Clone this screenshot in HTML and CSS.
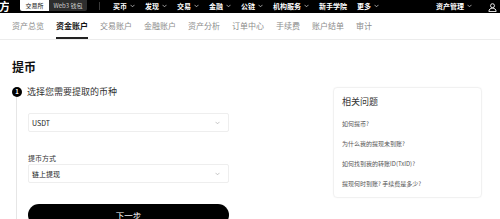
FILE: index.html
```html
<!DOCTYPE html>
<html lang="zh-CN">
<head>
<meta charset="utf-8">
<title>提币</title>
<link rel="stylesheet" href="styles.css">
</head>
<body>
<header class="topbar">
  <span class="logo">方</span>
  <div class="switch">
    <span class="sw sw-active">交易所</span>
    <span class="sw sw-web3">Web3 钱包</span>
  </div>
  <span class="sep"></span>
  <nav class="menu">
    <span class="mi">买币<svg class="chev" viewBox="0 0 6 4"><path d="M0.6 0.6 L3 3 L5.4 0.6"/></svg></span>
    <span class="mi">发现<svg class="chev" viewBox="0 0 6 4"><path d="M0.6 0.6 L3 3 L5.4 0.6"/></svg></span>
    <span class="mi">交易<svg class="chev" viewBox="0 0 6 4"><path d="M0.6 0.6 L3 3 L5.4 0.6"/></svg></span>
    <span class="mi">金融<svg class="chev" viewBox="0 0 6 4"><path d="M0.6 0.6 L3 3 L5.4 0.6"/></svg></span>
    <span class="mi">公链<svg class="chev" viewBox="0 0 6 4"><path d="M0.6 0.6 L3 3 L5.4 0.6"/></svg></span>
    <span class="mi">机构服务<svg class="chev" viewBox="0 0 6 4"><path d="M0.6 0.6 L3 3 L5.4 0.6"/></svg></span>
    <span class="mi">新手学院</span>
    <span class="mi">更多<svg class="chev" viewBox="0 0 6 4"><path d="M0.6 0.6 L3 3 L5.4 0.6"/></svg></span>
  </nav>
  <div class="topright">
    <span class="mi">资产管理<svg class="chev" viewBox="0 0 6 4"><path d="M0.6 0.6 L3 3 L5.4 0.6"/></svg></span>
    <svg class="user" viewBox="0 0 10 10"><circle cx="5" cy="3" r="2.2"/><path d="M1 9.5 C1 6.8 2.8 5.8 5 5.8 C7.2 5.8 9 6.8 9 9.5 Z"/></svg>
  </div>
</header>

<div class="tabs">
  <span class="tab">资产总览</span>
  <span class="tab tab-active">资金账户</span>
  <span class="tab">交易账户</span>
  <span class="tab">金融账户</span>
  <span class="tab">资产分析</span>
  <span class="tab">订单中心</span>
  <span class="tab">手续费</span>
  <span class="tab">账户结单</span>
  <span class="tab">审计</span>
</div>

<main class="main">
  <section class="form">
    <h1 class="title">提币</h1>
    <div class="step">
      <div class="step-head">
        <span class="num">1</span>
        <span class="step-text">选择您需要提取的币种</span>
      </div>
      <div class="step-body">
        <div class="select">
          <span>USDT</span>
          <svg class="chev-g" viewBox="0 0 6 4"><path d="M0.6 0.6 L3 3 L5.4 0.6"/></svg>
        </div>
        <div class="label">提币方式</div>
        <div class="select">
          <span>链上提现</span>
          <svg class="chev-g" viewBox="0 0 6 4"><path d="M0.6 0.6 L3 3 L5.4 0.6"/></svg>
        </div>
        <button class="next">下一步</button>
      </div>
    </div>
  </section>

  <aside class="card">
    <div class="card-title">相关问题</div>
    <ul class="faq">
      <li>如何提币?</li>
      <li>为什么我的提现未到账?</li>
      <li>如何找到我的转账ID(TxID)?</li>
      <li>提现何时到账? 手续费是多少?</li>
    </ul>
  </aside>
</main>
</body>
</html>
```

FILE: styles.css
```css
* { box-sizing: border-box; }

html, body {
  margin: 0;
  padding: 0;
  background: #fff;
  font-family: "Noto Sans CJK SC", "Noto Sans", "Liberation Sans", sans-serif;
  color: #222;
  overflow: hidden;
}

/* top bar */
.topbar {
  height: 13px;
  background: #000;
  display: flex;
  align-items: flex-start;
  color: #fff;
}
.logo {
  width: 10px;
  height: 13px;
  font-size: 11px;
  line-height: 13px;
  font-weight: 700;
  margin-left: -1px;
  overflow: hidden;
}
.switch {
  display: flex;
  margin-left: 11px;
  height: 11px;
}
.sw {
  font-size: 6px;
  line-height: 11px;
  text-align: center;
}
.sw-active {
  width: 29px;
  background: #fff;
  color: #111;
  border-radius: 0 0 0 2px;
}
.sw-web3 {
  width: 38px;
  background: #2e2e2e;
  color: #d0d0d0;
  border-radius: 0 0 2px 0;
}
.sep {
  width: 1px;
  height: 8px;
  background: #3a3a3a;
  margin: 2px 0 0 12px;
}
.menu {
  display: flex;
  margin-left: 13px;
  gap: 10px;
}
.mi {
  display: flex;
  align-items: center;
  gap: 3px;
  font-size: 7px;
  line-height: 12px;
  font-weight: 700;
  color: #fff;
}
.chev {
  width: 5px;
  height: 4px;
  fill: none;
  stroke: #cfcfcf;
  stroke-width: 0.9;
}
.topright {
  margin-left: auto;
  display: flex;
  align-items: center;
  gap: 16px;
  padding-right: 3px;
}
.user {
  width: 9px;
  height: 9px;
  margin-top: 2px;
  fill: none;
  stroke: #fff;
  stroke-width: 1;
}

/* tabs */
.tabs {
  height: 27px;
  display: flex;
  gap: 12px;
  padding-left: 12px;
  border-bottom: 1px solid #ececec;
}
.tab {
  display: flex;
  align-items: center;
  font-size: 8px;
  color: #8c8c8c;
  border-bottom: 2px solid transparent;
  padding-top: 1px;
}
.tab-active {
  color: #111;
  font-weight: 700;
  border-bottom-color: #222;
}

/* main */
.main {
  display: flex;
  align-items: flex-start;
  padding-left: 12px;
}
.form {
  width: 217px;
  flex: 0 0 217px;
}
.title {
  margin: 21px 0 0;
  font-size: 12px;
  line-height: 12px;
  font-weight: 700;
  color: #111;
}
.step {
  margin-top: 14px;
}
.step-head {
  display: flex;
  align-items: center;
  gap: 5px;
  height: 10px;
}
.num {
  width: 10px;
  height: 10px;
  border-radius: 50%;
  background: #000;
  color: #fff;
  font-size: 6px;
  line-height: 10px;
  font-weight: 700;
  text-align: center;
}
.step-text {
  font-size: 9px;
  line-height: 10px;
  color: #333;
}
.step-body {
  margin-left: 4px;
  border-left: 1px solid #e6e6e6;
  padding: 16px 0 20px 11px;
}
.select {
  height: 19px;
  border: 1px solid #eeeeee;
  border-radius: 2px;
  display: flex;
  align-items: center;
  justify-content: space-between;
  padding: 0 8px 0 3px;
  font-size: 7px;
  color: #222;
}
.chev-g {
  width: 5px;
  height: 4px;
  fill: none;
  stroke: #aaa;
  stroke-width: 0.8;
}
.label {
  margin: 22px 0 2px;
  font-size: 7px;
  line-height: 8px;
  color: #333;
}
.next {
  display: block;
  width: 100%;
  height: 22px;
  margin-top: 21px;
  border: 0;
  border-radius: 11px;
  background: #000;
  color: #fff;
  font-family: inherit;
  font-size: 8.5px;
  padding: 0;
}

/* side card */
.card {
  width: 149px;
  margin: 47px 0 0 104px;
  border: 1px solid #f1f1f1;
  border-radius: 4px;
  padding: 9px 8px 3px;
  box-shadow: 0 0 2px rgba(0,0,0,0.03);
}
.card-title {
  font-size: 9px;
  line-height: 10px;
  color: #333;
}
.faq {
  list-style: none;
  margin: 7px 0 0;
  padding: 0;
}
.faq li {
  font-size: 6px;
  line-height: 20px;
  color: #555;
  white-space: nowrap;
}
```
